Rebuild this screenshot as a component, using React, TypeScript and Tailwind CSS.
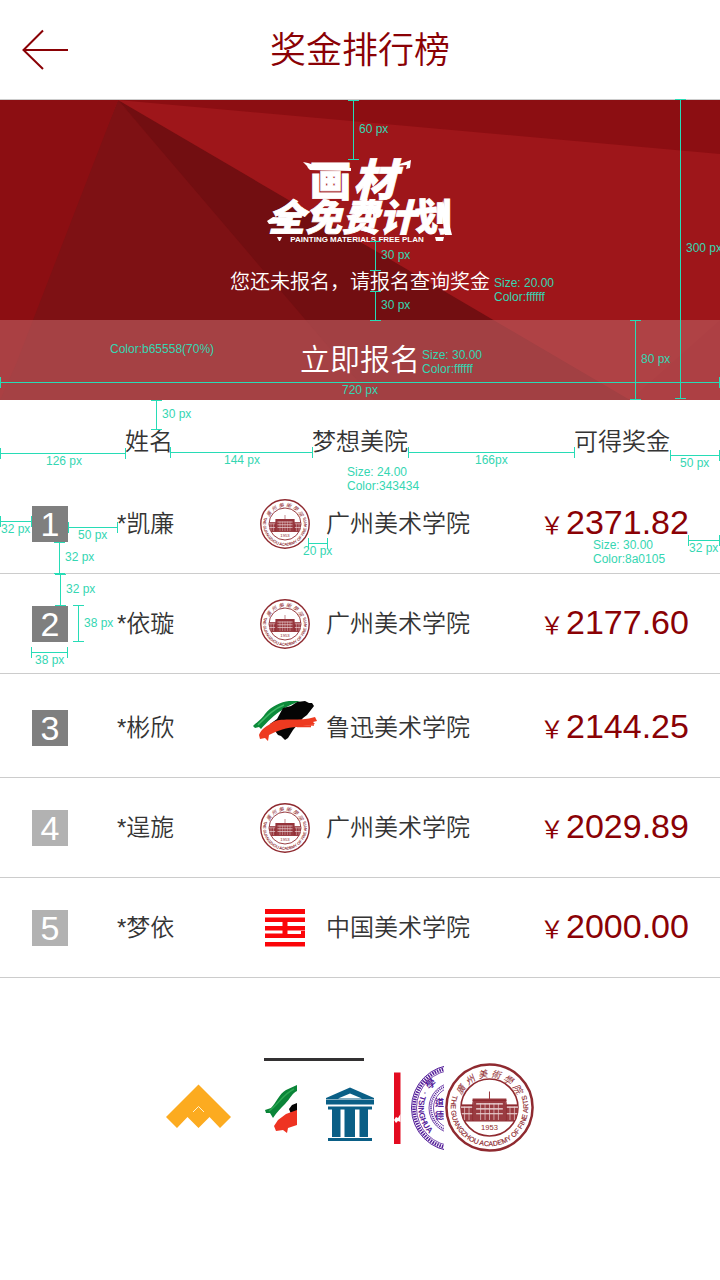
import React from "react";

type School = "gz" | "lx" | "zg";

const rows: { rank: number; name: string; logo: School; school: string; prize: string }[] = [
  { rank: 1, name: "*凯廉", logo: "gz", school: "广州美术学院", prize: "2371.82" },
  { rank: 2, name: "*依璇", logo: "gz", school: "广州美术学院", prize: "2177.60" },
  { rank: 3, name: "*彬欣", logo: "lx", school: "鲁迅美术学院", prize: "2144.25" },
  { rank: 4, name: "*逞旎", logo: "gz", school: "广州美术学院", prize: "2029.89" },
  { rank: 5, name: "*梦依", logo: "zg", school: "中国美术学院", prize: "2000.00" },
];

function Seal({ className, id }: { className: string; id: string }) {
  const top = ["廣", "州", "美", "術", "學", "院"];
  return (
    <svg className={className} viewBox="0 0 100 100" role="img" aria-label="广州美术学院">
      <defs>
        <path id={`${id}-arc`} d="M11 31 A43.4 43.4 0 1 0 89 31" />
        <clipPath id={`${id}-clip`}>
          <circle cx="50" cy="50" r="32" />
        </clipPath>
      </defs>
      <g fill="none" stroke="#8f2a30">
        <circle cx="50" cy="50" r="48.4" strokeWidth="2.8" />
        <circle cx="50" cy="50" r="32" strokeWidth="1.8" />
      </g>
      <g clipPath={`url(#${id}-clip)`}>
        <g fill="#9a3b41">
          <path d="M49.400 32h1.200v8h-1.200zM31 40h38v4H31zM32 44h36v21H32z" />
          <path d="M17 47h15v18H17zM68 47h15v18H68z" />
        </g>
        <path d="M35 46h30M35 51.500h30M35 57h30M17 49.500h14M69 49.500h14M17 57h14M69 57h14" stroke="#f3e3e4" strokeWidth="1.3" fill="none" />
        <path d="M40 45v19M45 45v19M50 45v19M55 45v19M60 45v19M22 49v15M27 49v15M73 49v15M78 49v15" stroke="#e9cfd1" strokeWidth="0.8" fill="none" />
        <path d="M17 65h66M31 42h38M31.500 44v21M68.500 44v21M17 47.500h14M69 47.500h14" stroke="#8f2a30" strokeWidth="1.6" fill="none" />
      </g>
      <text x="50" y="75.500" textAnchor="middle" fontSize="8.500" fill="#8f2a30">
        1953
      </text>
      <text fontSize="7.800" fontWeight="400" fill="#8f2a30" stroke="#8f2a30" strokeWidth="0.200" textAnchor="middle">
        <textPath href={`#${id}-arc`} startOffset="50%">
          THE GUANGZHOU ACADEMY OF FINE ARTS
        </textPath>
      </text>
      {top.map((c, i) => (
        <text
          key={c}
          x="50"
          y="16"
          fontSize="10.500"
          fontStyle="italic"
          fontWeight="400"
          textAnchor="middle"
          fill="#8f2a30"
          transform={`rotate(${-58 + i * 23} 50 50)`}
          className="font-['Noto_Sans_CJK_TC',sans-serif]"
        >
          {c}
        </text>
      ))}
    </svg>
  );
}

function SchoolLogo({ kind, id }: { kind: School; id: string }) {
  if (kind === "gz") return <Seal id={id} className="size-[50px]" />;
  if (kind === "lx")
    return (
      <svg className="h-[56px] w-[64px]" viewBox="0 0 64 56" role="img" aria-label="鲁迅美术学院">
        <path d="M0 26 C4 22 8 20 12 14 C18 6 28 2 36 1 L47 1 C38 5 34 6 29 10 C22 14 14 22 8 29 L6 27 L2 28 Z" fill="#0c8a3a" />
        <path d="M5 25 C13 17 20 9 31 5" fill="none" stroke="#3fb765" strokeWidth="1.5" />
        <path d="M30 8 L38 6 L44 2 L52 1 L56 3 L59 3 L61 6 L54 15 L50 18 L40 30 L35 38 L32 40 L28 36 L25 35 L17 24 L24 19 Z" fill="#050505" />
        <path d="M6 35 C8 29 14 26 20 22 C30 17 46 22 62 17 L64 21 L60 22 L62 24 L44 27 C34 27 24 31 16 35 L15 41 L12 38 L7 39 Z" fill="#ee3a20" />
        <path d="M46 24.500 L61 25 M44 26.500 L58 26.500" stroke="#ee3a20" strokeWidth="1.500" />
      </svg>
    );
  return (
    <svg className="h-[38px] w-10" viewBox="0 0 40 38" role="img" aria-label="中国美术学院">
      <path fill="#fb0509" d="M0 0h40v5H0zM0 8.500h40v4.500H22.500V17h17.500v4.500H22.500V25h13.500v-3h4v7H0v-4.500h17.500v-3H0V17h17.500v-4H0zM0 33h40v4.500H0z" />
    </svg>
  );
}

function PlanLogo() {
  return (
    <svg className="h-[82px] w-[186px] overflow-visible" viewBox="0 0 186 82" role="img" aria-label="画材全免费计划">
      <g fill="#fff" stroke="#fff" fontWeight="900" strokeWidth="0.8" className="font-['Noto_Sans_CJK_SC',sans-serif]">
        <text x="43" y="36" fontSize="41">
          画
        </text>
        <text x="86" y="36" fontSize="44" fontStyle="italic">
          材
        </text>
        <text x="1" y="71" fontSize="37" fontStyle="italic">
          全免费计
        </text>
        <text x="148" y="71" fontSize="37">
          划
        </text>
      </g>
      <path d="M36 2 L41 3 L50 6 L84 8 L84 11 L43 10 L41 8 L40 6 Z" fill="#fff" />
      <path d="M127 6 L144 0 L143 8 L139 9 L140 5 Z" fill="#fff" />
      <path d="M0 61 L6 57 L24 58 L22 63 L2 64 Z M176 40 L185 75 H178 L174 50 Z" fill="#fff" />
      <text x="90" y="82" fontSize="8" fontWeight="700" textAnchor="middle" fill="#fff">
        PAINTING MATERIALS FREE PLAN
      </text>
      <path d="M10 77 h5 l-2 4 h-1 Z M168 77 h9 l-1 4 h-7 Z" fill="#fff" />
    </svg>
  );
}

function Facets() {
  return (
    <svg className="absolute inset-0 h-full w-full" viewBox="0 0 720 300" preserveAspectRatio="none" aria-hidden="true">
      <rect width="720" height="300" fill="#9e161a" />
      <path d="M118 0 H720 V54 Z" fill="#8c0e12" />
      <path d="M118 0 L-4 300 H380 Z" fill="#7e1114" />
      <path d="M0 0 H118 L16 264 L0 300 Z" fill="#8c0e12" />
      <path d="M118 0 L630 300 H374 Z" fill="#720e11" />
      <path d="M720 220 L630 300 H720 Z" fill="#970f14" />
    </svg>
  );
}

/* Spacing marks: [orientation, fixed coordinate, start, end] */
const marks: ["v" | "h", number, number, number][] = [
  ["v", 353, 100, 159],
  ["v", 375, 241, 270],
  ["v", 375, 291, 320],
  ["v", 680, 99, 398],
  ["v", 635, 320, 399],
  ["h", 382, 0, 719],
  ["v", 156, 400, 429],
  ["h", 453, 0, 125],
  ["h", 452, 170, 312],
  ["h", 452, 408, 574],
  ["h", 455, 670, 719],
  ["h", 521, 0, 31],
  ["h", 527, 68, 117],
  ["v", 59, 542, 573],
  ["v", 60, 574, 605],
  ["v", 78, 605, 641],
  ["h", 652, 31, 67],
  ["h", 543, 308, 327],
  ["h", 540, 688, 719],
];

const notes: [number, number, string][] = [
  [359, 133, "60 px"],
  [381, 259, "30 px"],
  [381, 309, "30 px"],
  [686, 252, "300 px"],
  [494, 287, "Size: 20.00"],
  [494, 301, "Color:ffffff"],
  [110, 353, "Color:b65558(70%)"],
  [422, 359, "Size: 30.00"],
  [422, 373, "Color:ffffff"],
  [641, 363, "80 px"],
  [342, 394, "720 px"],
  [162, 418, "30 px"],
  [46, 465, "126 px"],
  [224, 464, "144 px"],
  [475, 464, "166px"],
  [680, 467, "50 px"],
  [347, 476, "Size: 24.00"],
  [347, 490, "Color:343434"],
  [1, 533, "32 px"],
  [78, 539, "50 px"],
  [65, 561, "32 px"],
  [66, 593, "32 px"],
  [84, 627, "38 px"],
  [35, 664, "38 px"],
  [303, 555, "20 px"],
  [593, 549, "Size: 30.00"],
  [593, 563, "Color:8a0105"],
  [689, 552, "32 px"],
];

function SpecOverlay() {
  return (
    <svg className="pointer-events-none absolute left-0 top-0 h-[700px] w-[720px]" viewBox="0 0 720 700">
      <g stroke="#27dcb6" strokeWidth="1" fill="none">
        {marks.map(([o, c, a, b], i) => {
          const m = c + 0.5;
          const s = a + 0.5;
          const e = b + 0.5;
          return (
            <path
              key={i}
              d={
                o === "v"
                  ? `M${m} ${s}V${e}M${m - 5.5} ${s}h11M${m - 5.5} ${e}h11`
                  : `M${s} ${m}H${e}M${s} ${m - 5.5}v11M${e} ${m - 5.5}v11`
              }
            />
          );
        })}
      </g>
      <g fill="#35d6b2" fontSize="12" fontWeight="400">
        {notes.map(([x, y, t], i) => (
          <text key={i} x={x} y={y}>
            {t}
          </text>
        ))}
      </g>
    </svg>
  );
}

function LogoStrip() {
  return (
    <footer className="pt-20">
      <div className="ml-[264px] h-[3px] w-[100px] bg-[#333132]" />
      <div className="ml-[166px] flex pt-px">
        <svg className="h-[92px] w-[65px]" viewBox="0 0 65 92" aria-hidden="true">
          <path d="M32.500 22.500 L65 55 L54 66 L43.500 55 L32.500 66 L21.500 55 L11 66 L0 55 Z" fill="#fcab20" />
          <path d="M27 50 L32.500 44.500 L38 50" fill="none" stroke="#fff3d0" strokeWidth="1" />
        </svg>
        <svg className="ml-[33px] h-[92px] w-[33px]" viewBox="0 0 33 92" aria-hidden="true">
          <path d="M1 48 L7 46 C12 41 15 32 22 28 L33 23 V29 C28 31 26 37 21 42 C17 46 13 50 9 56 L6 51 L2 51 Z" fill="#0a8438" />
          <path d="M5 49 C14 43 18 33 30 27" fill="none" stroke="#2aa651" strokeWidth="1.500" />
          <path d="M33 41 L28 43 L25 47 L27 52 L33 50 Z" fill="#050505" />
          <path d="M10 64 L14 58 L22 52 L33 48 V63 L24 66 L23 71 L19 68 L12 69 Z" fill="#ee3322" />
        </svg>
        <svg className="ml-[27px] h-[92px] w-[52px]" viewBox="0 0 52 92" aria-hidden="true">
          <path fillRule="evenodd" fill="#0a5f86" d="M26 25.500 L50 36 V37.500 H2 V36 Z M26 31.500 L38 36.500 H14 Z" />
          <path fill="#0a5f86" d="M2 38 H50 V42.500 H2 Z M4 44.500 H48 V47.500 H4 Z M8 47 H16.500 V75 H8 Z M20.500 47 H31 V75 H20.500 Z M35.500 47 H44 V75 H35.500 Z M4 76 H48 V79 H4 Z" />
        </svg>
        <svg className="ml-[17px] h-[92px] w-2" viewBox="0 0 8 92" aria-hidden="true">
          <path d="M1 10.500 H7.500 V82 H1 Z" fill="#e30b20" />
          <path d="M1 58 L3 55 L5 56 L7.500 52 V60 L5 59 L3 61 Z" fill="#fff" />
        </svg>
        <svg className="ml-[9px] h-[92px] w-[34px]" viewBox="0 0 34 92" aria-hidden="true">
          <defs>
            <path id="thu-arc" d="M14 27 A35.500 35.500 0 0 0 44.500 81.500" />
          </defs>
          <g fill="none" stroke="#55209a">
            <circle cx="44.500" cy="46" r="43" strokeWidth="1" />
            <circle cx="44.500" cy="46" r="40.500" strokeWidth="3.500" strokeDasharray="1.500 1" />
            <circle cx="44.500" cy="46" r="38" strokeWidth="0.800" />
            <circle cx="44.500" cy="46" r="25.500" strokeWidth="0.800" />
            <circle cx="44.500" cy="46" r="23.500" strokeWidth="2" strokeDasharray="1 1" />
            <circle cx="44.500" cy="46" r="21" strokeWidth="0.800" />
          </g>
          <g fill="#55209a" fontWeight="700">
            <text fontSize="8">
              <textPath href="#thu-arc" startOffset="2">
                · TSINGHUA
              </textPath>
            </text>
            <text x="16" y="25" fontSize="10" transform="rotate(-40 21 22)" className="font-['Noto_Sans_CJK_TC',sans-serif]">
              學
            </text>
            <text x="25" y="44" fontSize="9" className="font-['Noto_Sans_CJK_TC',sans-serif]">
              道
            </text>
            <text x="25" y="57" fontSize="9" className="font-['Noto_Sans_CJK_TC',sans-serif]">
              德
            </text>
          </g>
        </svg>
        <Seal id="strip" className="ml-px mt-px size-[89px]" />
      </div>
    </footer>
  );
}

export default function App() {
  return (
    <div className="relative min-h-screen overflow-hidden bg-white font-['Liberation_Sans','Noto_Sans_CJK_SC',sans-serif] font-[350] text-[#343434]">
      <header className="relative flex h-[100px] items-center justify-center border-b border-[#cccccc] pt-0.5">
        <button type="button" aria-label="返回" className="absolute left-[22px] top-[29px]">
          <svg className="h-[41px] w-[46px]" viewBox="0 0 46 41" fill="none" stroke="#8a0105" strokeWidth="2">
            <path d="M21 1.500 L1.500 21 L21 40 M1.500 21 H46" />
          </svg>
        </button>
        <h1 className="text-[36px] font-[350] leading-[52px] text-[#8a0105]">奖金排行榜</h1>
      </header>

      <section className="relative h-[300px]">
        <Facets />
        <div className="relative flex flex-col items-center">
          <div className="pt-[60px]">
            <PlanLogo />
          </div>
          <p className="flex h-[78px] items-center pt-0.5 text-[20px] leading-[30px] text-white">您还未报名，请报名查询奖金</p>
          <button type="button" className="h-20 w-full bg-[#b65558]/70 text-[30px] font-[350] leading-[44px] text-white">
            立即报名
          </button>
        </div>
      </section>

      <table className="w-full table-fixed border-separate border-spacing-0 text-left text-[24px] leading-[36px]">
        <colgroup>
          <col className="w-[117px]" />
          <col className="w-[133px]" />
          <col />
          <col className="w-[180px]" />
        </colgroup>
        <thead>
          <tr className="h-[74px] align-top">
            <td className="p-0" />
            <th scope="col" className="p-0 pl-2 pt-6 font-[350]">姓名</th>
            <th scope="col" className="p-0 pl-[62px] pt-6 font-[350]">梦想美院</th>
            <th scope="col" className="p-0 pl-[34px] pt-6 font-[350]">可得奖金</th>
          </tr>
        </thead>
        <tbody>
          {rows.map((r) => {
            const cell = `border-b border-[#cccccc] p-0 ${r.logo === "lx" ? "pt-1" : ""}`;
            return (
              <tr key={r.rank} className={r.logo === "lx" ? "h-[104px]" : "h-[100px]"}>
                <td className={cell}>
                  <span
                    className={`ml-8 flex size-9 items-center justify-center text-[34px] font-normal text-white ${
                      r.rank <= 3 ? "bg-[#7f7f7f]" : "bg-[#b2b2b2]"
                    }`}
                  >
                    {r.rank}
                  </span>
                </td>
                <td className={cell}>{r.name}</td>
                <td className={cell}>
                  <span className="flex items-center gap-1.5 whitespace-nowrap">
                    <span className="flex w-[70px] shrink-0 justify-center">
                      <SchoolLogo kind={r.logo} id={`row-${r.rank}`} />
                    </span>
                    {r.school}
                  </span>
                </td>
                <td className={`${cell} text-[#8a0105]`}>
                  <span className="flex items-baseline gap-0.5">
                    <span className="font-normal">￥</span>
                    <span className="text-[34px] font-normal">{r.prize}</span>
                  </span>
                </td>
              </tr>
            );
          })}
        </tbody>
      </table>

      <LogoStrip />
      <SpecOverlay />
    </div>
  );
}
